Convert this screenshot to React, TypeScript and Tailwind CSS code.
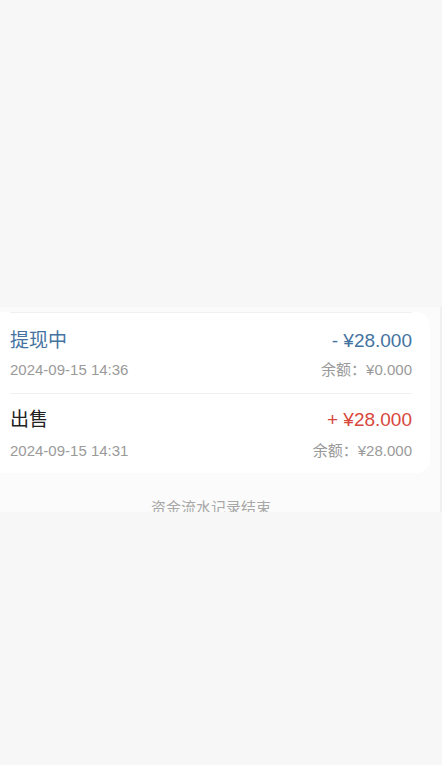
import React from "react";

const rows = [
  { title: "提现中", titleColor: "text-[#44739f]", amount: "- ¥28.000", amountColor: "text-[#44739f]", date: "2024-09-15 14:36", balance: "余额：¥0.000", pad: "pt-[16px] pb-[13px] gap-[7px] border-b border-[#f0f0f0]" },
  { title: "出售", titleColor: "text-[#222222]", amount: "+ ¥28.000", amountColor: "text-[#d8473c]", date: "2024-09-15 14:31", balance: "余额：¥28.000", pad: "pt-[14px] pb-[11px] gap-[9px]" },
];

export default function App() {
  return (
    <div
      className="min-h-[765px] w-full bg-[#f7f7f7] flex flex-col"
      style={{ fontFamily: '"Liberation Sans", "Noto Sans CJK SC", sans-serif' }}
    >
      <div className="h-[307px] shrink-0" />
      <div className="h-[205px] shrink-0 overflow-hidden bg-[#fbfbfb] border-r-2 border-[#f0f0f0]">
        <div className="mt-[5px] mr-[10px] bg-white rounded-r-[14px] pl-[10px] pr-[18px] pb-[1px]">
          <div className="border-t border-[#f0f0f0]" />
          {rows.map((r, i) => (
            <div key={i} className={`flex flex-col ${r.pad}`}>
              <div className="flex justify-between items-center h-[24px]">
                <span className={`text-[19px] ${r.titleColor}`}>{r.title}</span>
                <span className={`text-[19px] ${r.amountColor}`}>{r.amount}</span>
              </div>
              <div className="flex justify-between items-center h-[20px]">
                <span className="text-[15px] text-[#9a9a9a]">{r.date}</span>
                <span className="text-[15px] text-[#9a9a9a]">{r.balance}</span>
              </div>
            </div>
          ))}
        </div>
        <div className="mt-[25px] mr-[18px] text-center text-[15px] text-[#a8a8a8] leading-[20px]">资金流水记录结束</div>
      </div>
    </div>
  );
}
